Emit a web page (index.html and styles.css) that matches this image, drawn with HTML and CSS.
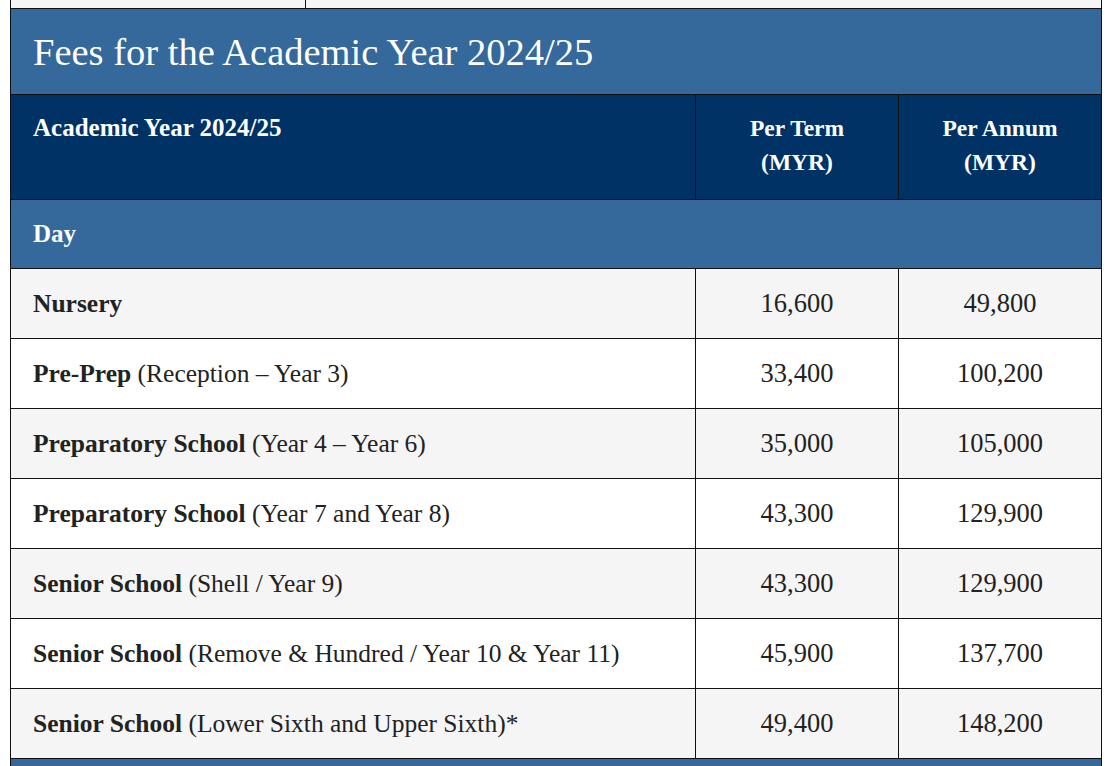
FILE: index.html
```html
<!DOCTYPE html>
<html lang="en">
<head>
<meta charset="utf-8">
<title>Fees for the Academic Year 2024/25</title>
<link rel="stylesheet" href="styles.css">
</head>
<body>
<div class="page">
  <div class="prev">
    <div class="prev-cell prev-a"></div>
    <div class="prev-cell prev-b"></div>
  </div>
  <table class="fees">
    <colgroup>
      <col class="c-label">
      <col class="c-num">
      <col class="c-num">
    </colgroup>
    <thead>
      <tr class="title-row"><th colspan="3" class="title">Fees for the Academic Year 2024/25</th></tr>
      <tr class="head-row">
        <th class="h-label">Academic Year 2024/25</th>
        <th class="h-num">Per Term<br>(MYR)</th>
        <th class="h-num">Per Annum<br>(MYR)</th>
      </tr>
    </thead>
    <tbody>
      <tr class="group-row"><td colspan="3" class="group">Day</td></tr>
      <tr class="odd"><td class="label"><b>Nursery</b></td><td class="num">16,600</td><td class="num">49,800</td></tr>
      <tr class="even"><td class="label"><b>Pre-Prep</b> (Reception – Year 3)</td><td class="num">33,400</td><td class="num">100,200</td></tr>
      <tr class="odd"><td class="label"><b>Preparatory School</b> (Year 4 – Year 6)</td><td class="num">35,000</td><td class="num">105,000</td></tr>
      <tr class="even"><td class="label"><b>Preparatory School</b> (Year 7 and Year 8)</td><td class="num">43,300</td><td class="num">129,900</td></tr>
      <tr class="odd"><td class="label"><b>Senior School</b> (Shell / Year 9)</td><td class="num">43,300</td><td class="num">129,900</td></tr>
      <tr class="even"><td class="label"><b>Senior School</b> (Remove &amp; Hundred / Year 10 &amp; Year 11)</td><td class="num">45,900</td><td class="num">137,700</td></tr>
      <tr class="odd"><td class="label"><b>Senior School</b> (Lower Sixth and Upper Sixth)*</td><td class="num">49,400</td><td class="num">148,200</td></tr>
    </tbody>
  </table>
  <div class="next"></div>
</div>
</body>
</html>
```
FILE: styles.css
```css
html, body {
  margin: 0;
  padding: 0;
  background: #ffffff;
}
body {
  font-family: "Liberation Serif", "Times New Roman", serif;
  color: #222222;
}
.page {
  width: 1092px;
  margin-left: 10px;
}
.prev {
  display: flex;
  height: 8px;
  border-left: 1px solid #111;
  border-right: 1px solid #111;
  background: #f5f5f5;
  box-sizing: border-box;
}
.prev-cell {
  height: 8px;
}
.prev-a {
  width: 294px;
  border-right: 1px solid #111;
}
.prev-b {
  flex: 1;
}
.fees {
  width: 1092px;
  border-collapse: collapse;
  table-layout: fixed;
}
.c-label { width: 685px; }
.c-num { width: 203px; }
.fees th, .fees td {
  border: 1px solid #111;
  padding: 0 22px;
}
.title {
  background: #35689b;
  color: #ffffff;
  text-align: left;
  font-weight: normal;
  font-size: 38.5px;
  height: 86px;
  padding-bottom: 3px;
  box-sizing: border-box;
}
.head-row th {
  background: #003265;
  color: #ffffff;
  font-size: 25px;
  font-weight: bold;
  line-height: 34px;
  vertical-align: top;
  padding-top: 16px;
  height: 105px;
  box-sizing: border-box;
}
.h-label {
  text-align: left;
}
.head-row .h-num {
  text-align: center;
  font-size: 23.5px;
}
.group {
  background: #35689b;
  color: #ffffff;
  font-weight: bold;
  font-size: 25px;
  height: 69px;
  box-sizing: border-box;
}
.fees tbody tr.odd td, .fees tbody tr.even td {
  height: 70px;
  box-sizing: border-box;
  font-size: 25.5px;
  vertical-align: middle;
}
.odd td { background: #f5f5f5; }
.even td { background: #ffffff; }
.label b { font-weight: bold; }
.fees tbody tr td.num {
  text-align: center;
  font-size: 26.5px;
}
.next {
  height: 10px;
  background: #35689b;
  border-left: 1px solid #111;
  border-right: 1px solid #111;
  box-sizing: border-box;
}
```
